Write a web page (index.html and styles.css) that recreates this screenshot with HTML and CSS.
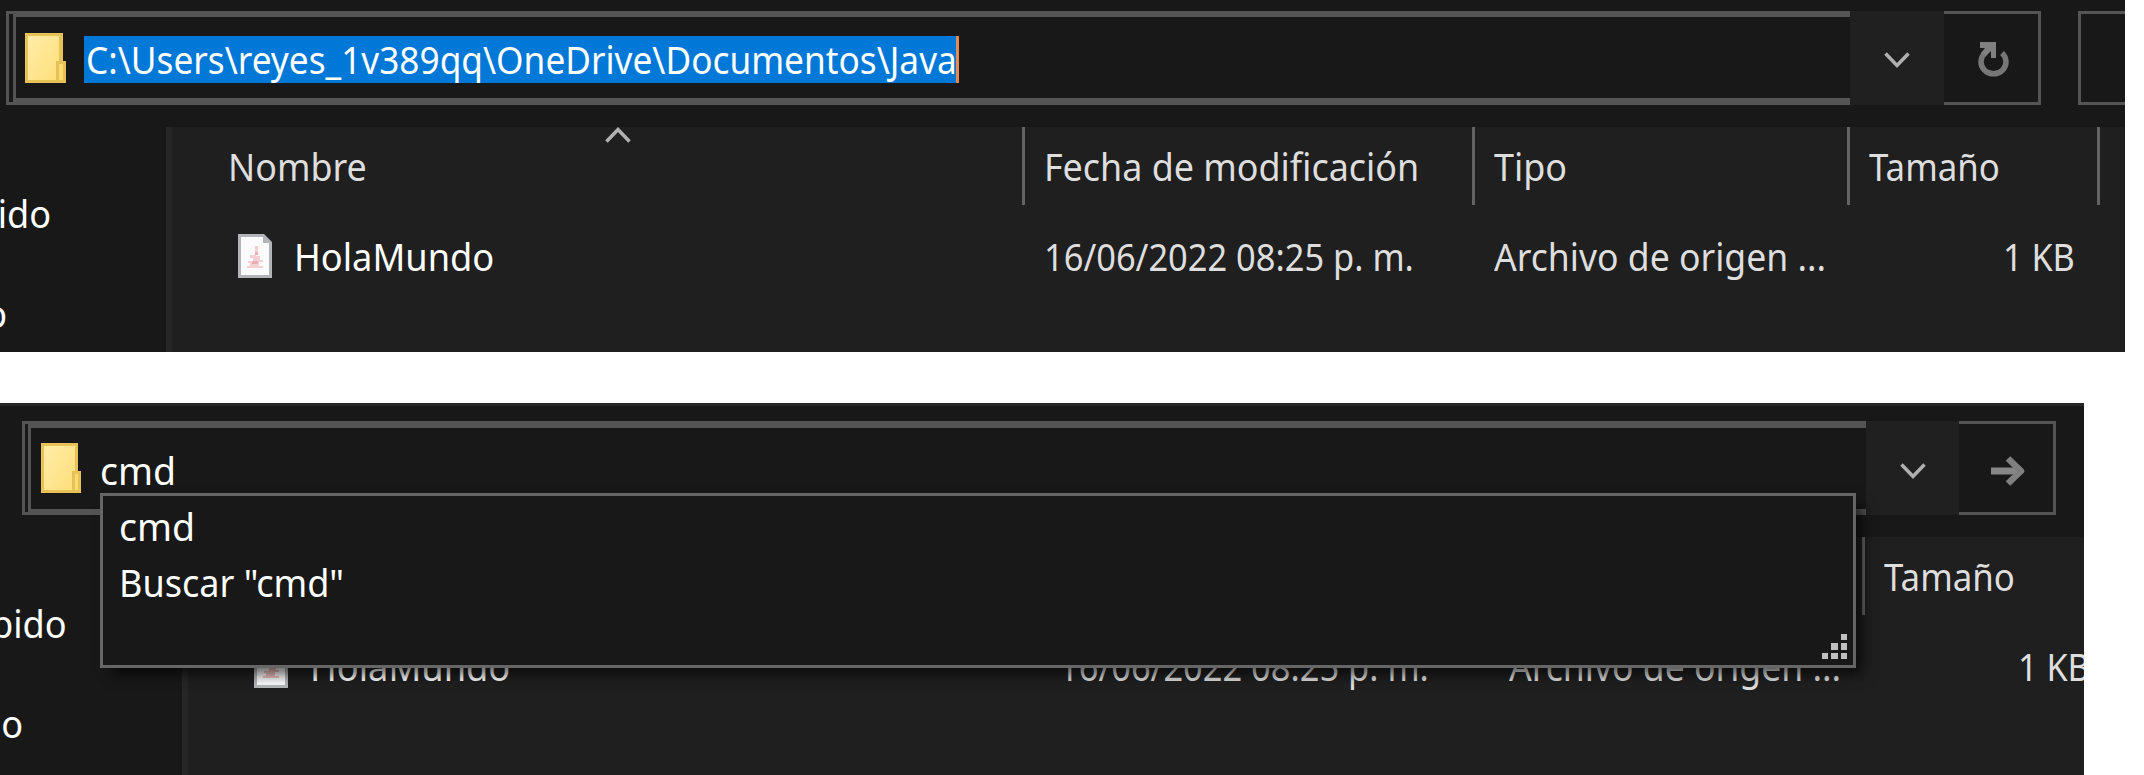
FILE: index.html
```html
<!DOCTYPE html>
<html lang="es">
<head>
<meta charset="utf-8">
<title>Java</title>
<link rel="stylesheet" href="styles.css">
</head>
<body>
<section class="explorer explorer-path">
  <div class="toolbar">
    <div class="address">
      <div class="address-inner">
        <svg class="folder" width="41" height="50" viewBox="0 0 41 50"><defs><linearGradient id="fold" x1="0" y1="0" x2="1" y2="1"><stop offset="0" stop-color="#ffeca6"/><stop offset="1" stop-color="#ffdf7c"/></linearGradient></defs><path fill="#e6c257" d="M0 0h38v28h3v22H0z"/><path fill="url(#fold)" d="M3 3h31v25h-3v19H3z"/><path fill="#fddc70" d="M34 31h4v16h-4z"/></svg>
        <span class="selection"><span class="t t-path">C:\Users\reyes_1v389qq\OneDrive\Documentos\Java</span></span>
      </div>
    </div>
    <div class="drop"><svg width="26" height="17" viewBox="0 0 26 17"><path class="chev" d="M1.500 1.500L13 13.500l11.500-12"/></svg></div>
    <div class="go"><svg class="refresh" width="32" height="36" viewBox="0 0 32 36"><path class="ring" d="M8 11A12.500 12 0 1 0 25 11"/><path fill="#808080" d="M3 0h16v16h-5V9l-5 5-5-3 4-5H3z"/></svg></div>
    <div class="search"></div>
  </div>
  <div class="content">
    <nav class="nav"><span class="nav-item"><span class="t t-ido">ido</span></span><span class="nav-item nav-next"><span class="t t-ido">o</span></span></nav>
    <div class="files">
      <div class="head">
        <span class="c-name"><svg class="sort" width="26" height="16" viewBox="0 0 26 16"><path class="chev" d="M1.500 14.500L13 2.500l11.500 12"/></svg><span class="t t-nombre">Nombre</span></span><span class="c-date"><span class="t t-fecha">Fecha de modificación</span></span><span class="c-type"><span class="t t-tipo">Tipo</span></span><span class="c-size"><span class="t t-tam">Tamaño</span></span>
      </div>
      <div class="row">
        <span class="c-name"><svg class="file" width="34" height="44" viewBox="0 0 34 44"><path fill="#b3b4b7" d="M0 0h26l8 8v36H0z"/><path fill="#fbfbfd" d="M3 3h22v6h6v32H3z"/><path fill="#f5cfd1" d="M17 12h3v6h-2v4h4v4h3v2h-4v4h4v2H9v-2h3v-3h-2v-2h5v-3h-3v-3h5z"/><path fill="#e8b0b3" d="M17 18h3v3h-3zm-3 9h6v3h-6z"/></svg><span class="t t-hola">HolaMundo</span></span><span class="c-date"><span class="t t-fh">16/06/2022 08:25 p. m.</span></span><span class="c-type"><span class="t t-arch">Archivo de origen ...</span></span><span class="c-size"><span class="t t-kb">1 KB</span></span>
      </div>
    </div>
  </div>
</section>
<section class="explorer explorer-cmd">
  <div class="toolbar">
    <div class="address">
      <div class="address-inner">
        <svg class="folder" width="41" height="50" viewBox="0 0 41 50"><path fill="#e6c257" d="M0 0h37v28h3v22H0z"/><path fill="url(#fold)" d="M3 3h31v25h-3v19H3z"/><path fill="#fddc70" d="M34 31h3v16h-3z"/></svg>
        <span class="typed"><span class="t t-cmd">cmd</span></span>
      </div>
    </div>
    <div class="drop"><svg width="26" height="17" viewBox="0 0 26 17"><path class="chev" d="M1.500 1.500L13 13.500l11.500-12"/></svg></div>
    <div class="go"><svg class="arrow" width="36" height="32" viewBox="0 0 36 32"><path fill="none" stroke="#868686" stroke-width="7" d="M1 16h30"/><path fill="none" stroke="#808080" stroke-width="6.500" stroke-linejoin="round" d="M18 3.500L31 16 18 28.500"/></svg></div>
    <div class="suggest">
      <div class="option"><span class="t t-cmd">cmd</span></div>
      <div class="option"><span class="t t-busc">Buscar "cmd"</span></div>
      <svg class="grip" width="25" height="25" viewBox="0 0 25 25"><path fill="#bfbfbf" d="M19 0h6v6h-6zM9 9h7v7H9zM19 9h6v7h-6zM0 19h6v6H0zM9 19h7v6H9zM19 19h6v6h-6z"/></svg>
    </div>
  </div>
  <div class="content">
    <nav class="nav"><span class="nav-item"><span class="t t-ido">pido</span></span><span class="nav-item nav-next"><span class="t t-ido">o</span></span></nav>
    <div class="files">
      <div class="head">
        <span class="c-name"></span><span class="c-date"></span><span class="c-type"></span><span class="c-size"><span class="t t-tam">Tamaño</span></span>
      </div>
      <div class="row">
        <span class="c-name"><svg class="file" width="34" height="44" viewBox="0 0 34 44"><path fill="#b3b4b7" d="M0 0h26l8 8v36H0z"/><path fill="#fbfbfd" d="M3 3h22v6h6v32H3z"/><path fill="#f0c0c2" d="M17 12h3v6h-2v4h4v4h3v2h-4v4h4v2H9v-2h3v-3h-2v-2h5v-3h-3v-3h5z"/></svg><span class="t t-hola">HolaMundo</span></span><span class="c-date"><span class="t t-fh">16/06/2022 08:25 p. m.</span></span><span class="c-type"><span class="t t-arch">Archivo de origen ...</span></span><span class="c-size"><span class="t t-kb">1 KB</span></span>
      </div>
    </div>
  </div>
</section>
</body>
</html>
```
FILE: styles.css
```css
* { box-sizing: border-box; }
body {
  margin: 0;
  width: 2144px;
  height: 775px;
  overflow: hidden;
  background: #fff;
  font-family: "Noto Sans", "Open Sans", sans-serif;
  font-size: 38px;
  line-height: 50px;
  color: #fff;
  white-space: nowrap;
}
svg { display: block; flex: none; }

/* Condensed labels: each keeps its own horizontal scale */
.t { display: inline-block; transform-origin: left center; }
.t-path { transform: scaleX(.927); }
.t-nombre { transform: scaleX(.943); }
.t-fecha { transform: scaleX(.944); }
.t-tipo { transform: scaleX(.945); }
.t-tam { transform: scaleX(.917); }
.t-hola { transform: scaleX(.953); }
.t-fh { transform: scaleX(.906); }
.t-arch { transform: scaleX(.936); }
.t-busc { transform: scaleX(.948); }
.t-cmd { transform: scaleX(.985); }
.t-kb { transform: scaleX(.9); transform-origin: right center; }
.t-ido { transform: scaleX(.95); transform-origin: right center; }

.explorer { background: #181818; overflow: hidden; }
.explorer-path { width: 2125px; height: 352px; padding-top: 11px; }
.explorer-cmd { width: 2084px; height: 372px; margin-top: 51px; padding-top: 15px; border-top: 3px solid #262626; }

.toolbar { position: relative; display: flex; height: 94px; padding-left: 6px; }
.explorer-cmd .toolbar { padding-left: 22px; }
.address { width: 1844px; border: 3px solid #545454; border-right: 0; padding-left: 4px; }
.explorer-cmd .address { padding-left: 3px; }
.address-inner { display: flex; height: 88px; border: 3px solid #545454; border-bottom-width: 4px; border-right: 0; padding: 16px 0 0 9px; }
.explorer-cmd .address-inner { border-width: 4px 0 3px 3px; padding: 15px 0 0 10px; }
.selection { height: 47px; margin: 3px 0 0 18px; padding-left: 2px; line-height: 46px; background: #0078d7; border-right: 3px solid #e38b50; width: 875px; }
.typed { margin: 2px 0 0 18px; }
.drop { width: 94px; display: flex; align-items: center; justify-content: center; padding-top: 4px; background: #202020; }
.explorer-cmd .drop { width: 93px; padding-top: 6px; }
.go { width: 97px; display: flex; align-items: center; justify-content: center; padding: 3px 0 0 4px; border: 3px solid #545454; border-left: 0; }
.search { width: 47px; margin-left: 37px; border: 3px solid #545454; border-right: 0; }
.explorer-cmd .go { padding-top: 6px; }
.chev { fill: none; stroke: #b0b0b0; stroke-width: 3.5; }
.ring { fill: none; stroke: #777; stroke-width: 5.5; }

.content { display: flex; margin-top: 22px; height: 260px; }
.nav { width: 166px; overflow: hidden; padding-top: 61px; }
.nav-item { display: flex; justify-content: flex-end; width: 51px; margin-bottom: 50px; }
.nav-next { width: 7px; }
.explorer-cmd .nav { width: 182px; }
.explorer-cmd .nav-item { width: 67px; }
.explorer-cmd .nav-next { width: 23px; }
.files { flex: 1; background: #1f1f1f; border-left: 6px solid #262626; color: #dedede; min-width: 0; }
.head, .row { display: grid; grid-template-columns: 853px 450px 375px 250px; align-items: center; }
.explorer-cmd .head, .explorer-cmd .row { grid-template-columns: 852px 450px 375px 250px; }
.head { height: 78px; }
.head > span { height: 78px; display: flex; align-items: center; border-right: 3px solid #636363; }
.row { height: 101px; }
.row > span { display: flex; align-items: center; }
.c-name { position: relative; padding-left: 56px; }
.row .c-name { padding-left: 66px; gap: 22px; color: #fff; }
.c-date, .c-type, .c-size { padding-left: 19px; }
.row .c-size { justify-content: flex-end; padding-right: 25px; }
.sort { position: absolute; left: 433px; top: 0; }

.suggest { position: absolute; left: 100px; top: 72px; width: 1756px; height: 175px; padding: 5px 16px; background: #181818; border: 3px solid #666; box-shadow: 9px 9px 12px -2px rgba(0, 0, 0, .6); z-index: 2; }
.option { height: 56px; }
.grip { position: absolute; right: 6px; bottom: 6px; }
```
